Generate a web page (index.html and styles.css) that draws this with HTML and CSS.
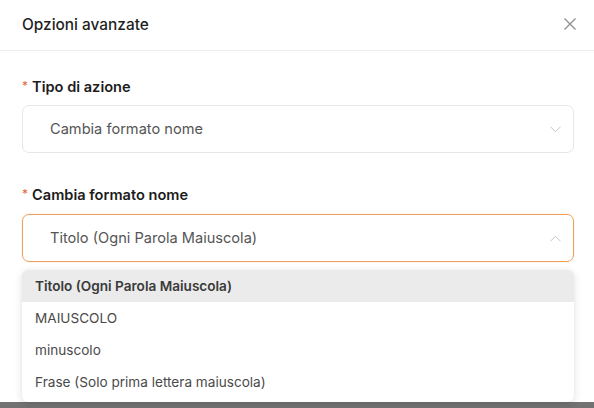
FILE: index.html
```html
<!DOCTYPE html>
<html lang="it">
<head>
<meta charset="utf-8">
<link rel="stylesheet" href="styles.css">
</head>
<body>
<div class="modal">
  <div class="header">
    <span class="title">Opzioni avanzate</span>
    <svg class="close" width="12" height="12" viewBox="0 0 12 12"><path d="M0.5 0.5 L11.5 11.5 M11.5 0.5 L0.5 11.5" stroke="#8c8c8c" stroke-width="1.2" fill="none"/></svg>
  </div>
  <div class="body">
    <div class="label"><span class="req">*</span>Tipo di azione</div>
    <div class="select">
      <span class="value">Cambia formato nome</span>
      <svg class="chev" width="11" height="7" viewBox="0 0 11 7"><path d="M0.5 0.8 L5.5 5.8 L10.5 0.8" stroke="#c4c4c4" stroke-width="1" fill="none"/></svg>
    </div>
    <div class="label second"><span class="req">*</span>Cambia formato nome</div>
    <div class="field">
      <div class="select focused">
        <span class="value">Titolo (Ogni Parola Maiuscola)</span>
        <svg class="chev" width="11" height="7" viewBox="0 0 11 7"><path d="M0.5 6.2 L5.5 1.2 L10.5 6.2" stroke="#c4c4c4" stroke-width="1" fill="none"/></svg>
      </div>
      <ul class="menu">
        <li class="opt active">Titolo (Ogni Parola Maiuscola)</li>
        <li class="opt">MAIUSCOLO</li>
        <li class="opt">minuscolo</li>
        <li class="opt">Frase (Solo prima lettera maiuscola)</li>
      </ul>
    </div>
  </div>
</div>
</body>
</html>
```
FILE: styles.css
```css
html, body {
  margin: 0;
  padding: 0;
}
body {
  width: 594px;
  height: 408px;
  overflow: hidden;
  background: #727272;
  font-family: Inter, "Liberation Sans", sans-serif;
}
.modal {
  background: #ffffff;
  height: 402px;
}
.header {
  height: 50px;
  border-bottom: 1px solid #ececec;
  display: flex;
  align-items: center;
  justify-content: space-between;
  padding: 0 18px 0 22px;
}
.title {
  font-size: 15.4px;
  font-weight: 500;
  color: #1f1f1f;
  margin-top: -2px;
}
.close {
  margin-top: -2px;
}
.body {
  padding: 0 20px 0 22px;
}
.label {
  margin-top: 27px;
  height: 18px;
  line-height: 18px;
  font-size: 14.6px;
  font-weight: 600;
  color: #1c1c1c;
  display: flex;
  align-items: center;
}
.label.second {
  margin-top: 33px;
}
.req {
  color: #e0663c;
  font-size: 12px;
  font-weight: 400;
  margin-right: 4px;
  position: relative;
  top: -1px;
}
.select {
  margin-top: 9px;
  height: 46px;
  border: 1px solid #e6e6e6;
  border-radius: 7px;
  display: flex;
  align-items: center;
  justify-content: space-between;
  padding: 0 12px 0 27px;
}
.select.focused {
  margin-top: 10px;
  border-color: #eda05c;
  box-shadow: 0 0 0 1px rgba(237, 160, 92, 0.08);
}
.value {
  font-size: 14.6px;
  color: #555555;
}
.field {
  position: relative;
}
.menu {
  position: absolute;
  left: 0;
  right: 0;
  top: 56px;
  margin: 0;
  padding: 0 0 4px;
  list-style: none;
  background: #ffffff;
  border-radius: 6px;
  box-shadow: 0 2px 8px rgba(0, 0, 0, 0.12), 0 0 1px rgba(0, 0, 0, 0.08);
  overflow: hidden;
}
.opt {
  height: 32px;
  line-height: 32px;
  padding: 0 13px;
  font-size: 13.6px;
  color: #4a4a4a;
}
.opt.active {
  background: #ebebeb;
  font-weight: 600;
  color: #3a3a3a;
}
```
